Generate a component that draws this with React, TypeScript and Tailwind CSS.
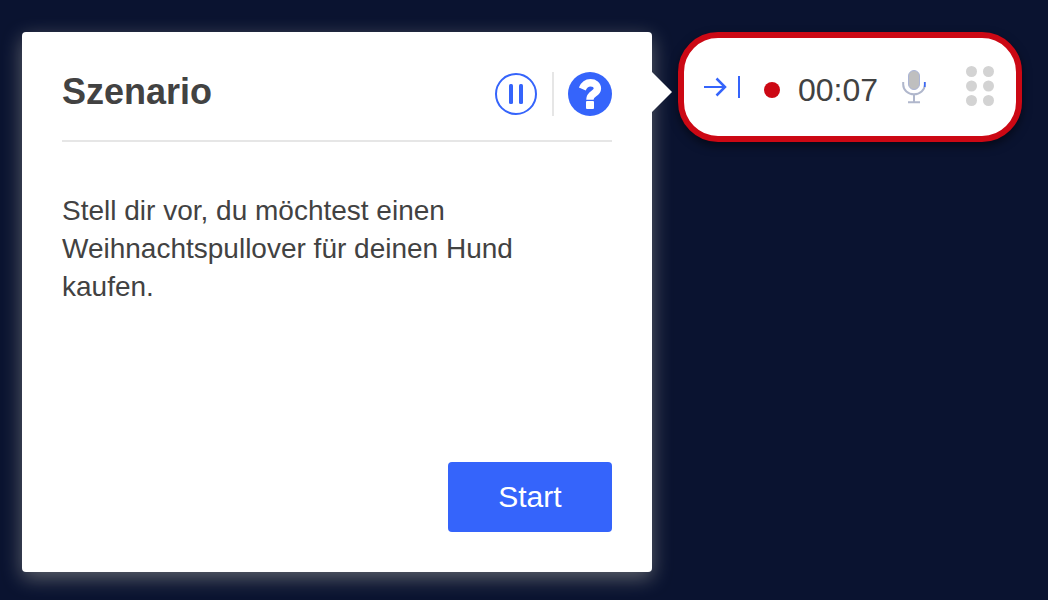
const ArrowToBarIcon = () => (
  <svg width="36" height="24" viewBox="0 0 36 24" fill="none" stroke="#3564fb" strokeWidth="2" aria-hidden="true">
    <path d="M0 12h21" />
    <path d="M12.5 3.5l8.500 8.500-8.500 8.500" strokeWidth="2.500" />
    <path d="M35 1v22" />
  </svg>
);

const PauseIcon = () => (
  <svg width="44" height="44" viewBox="0 0 44 44" fill="none" aria-hidden="true">
    <circle cx="22" cy="22" r="20" stroke="#3564fb" strokeWidth="2" />
    <rect x="15" y="12" width="4" height="20" rx="1.500" fill="#3564fb" />
    <rect x="25" y="12" width="4" height="20" rx="1.500" fill="#3564fb" />
  </svg>
);

const HelpIcon = () => (
  <svg width="44" height="44" viewBox="0 0 44 44" fill="none" aria-hidden="true">
    <circle cx="22" cy="22" r="22" fill="#3564fb" />
    <path d="M14.300 17C16 12.800 18.500 10.700 22.500 10.700c4 0 6.900 2.200 6.900 5.800 0 5.600-7.500 4.500-7.500 11.200" stroke="#fff" strokeWidth="7.400" />
    <rect x="18" y="29" width="8" height="8" rx="1" fill="#fff" />
  </svg>
);

const MicIcon = () => (
  <svg width="24" height="34" viewBox="0 0 24 34" fill="none" aria-hidden="true">
    <rect x="6.500" y="0.500" width="11" height="19" rx="5.500" fill="#bfbfbf" stroke="#aab4d6" />
    <path d="M1.200 12v2.500a10.800 9.800 0 0 0 21.600 0V12" stroke="#b0b7cc" strokeWidth="2" />
    <path d="M22.800 12v5" stroke="#3564fb" strokeWidth="1.500" />
    <path d="M12 24.500V32M6 32.200h12" stroke="#b0b7cc" strokeWidth="2" />
  </svg>
);

const GripIcon = () => (
  <svg width="28" height="42" viewBox="0 0 28 42" fill="#d3d3d3" aria-hidden="true">
    {[5.5, 20, 34.5].map((cy) => (
      <g key={cy}>
        <circle cx="5.500" cy={cy} r="5.500" />
        <circle cx="22.500" cy={cy} r="5.500" />
      </g>
    ))}
  </svg>
);

const ScenarioCard = () => (
  <section className="relative flex flex-1 flex-col rounded-sm bg-white p-10 shadow-[0_6px_20px_rgba(255,250,220,0.35)]">
    {/* Pointer towards the recorder */}
    <svg className="absolute top-10 left-full" width="20" height="40" viewBox="0 0 20 40" fill="#fff" aria-hidden="true">
      <path d="M0 0l20 20L0 40z" />
    </svg>

    <header className="flex items-start justify-between border-b-2 border-[#e6e6e6] pb-6">
      <h1 className="text-[36px] leading-10 font-bold">Szenario</h1>
      <div className="flex">
        <button type="button" aria-label="Pause">
          <PauseIcon />
        </button>
        <div className="mx-3.5 w-0.5 bg-[#e6e6e6]" />
        <button type="button" aria-label="Hilfe">
          <HelpIcon />
        </button>
      </div>
    </header>

    <p className="mt-[50px] mb-10 pr-10 text-[28px] leading-[38px]">
      Stell dir vor, du möchtest einen Weihnachtspullover für deinen Hund kaufen.
    </p>

    <button type="button" className="mt-auto w-41 self-end rounded-sm bg-[#3564fb] py-4 text-[30px] leading-[38px] text-white">
      Start
    </button>
  </section>
);

const Recorder = () => (
  <aside className="flex h-[110px] shrink-0 items-center rounded-[40px] border-6 border-[#cc0814] bg-white pr-[22px] pl-5 shadow-[0_4px_10px_rgba(0,0,0,0.5)]">
    <button type="button" aria-label="Einklappen">
      <ArrowToBarIcon />
    </button>
    <div className="ml-6 flex items-center gap-[18px] pt-1.5">
      <span className="size-4 rounded-full bg-[#cc0814]" />
      <time className="text-[32px] leading-10">00:07</time>
    </div>
    <button type="button" aria-label="Mikrofon" className="ml-6">
      <MicIcon />
    </button>
    <button type="button" aria-label="Verschieben" className="ml-10">
      <GripIcon />
    </button>
  </aside>
);

const App = () => (
  <main className="flex min-h-screen gap-[26px] bg-[#0a1330] pt-8 pr-[26px] pb-7 pl-[22px] font-['Liberation_Sans',Arial,sans-serif] text-[#424242]">
    <ScenarioCard />
    <Recorder />
  </main>
);

export default App;
